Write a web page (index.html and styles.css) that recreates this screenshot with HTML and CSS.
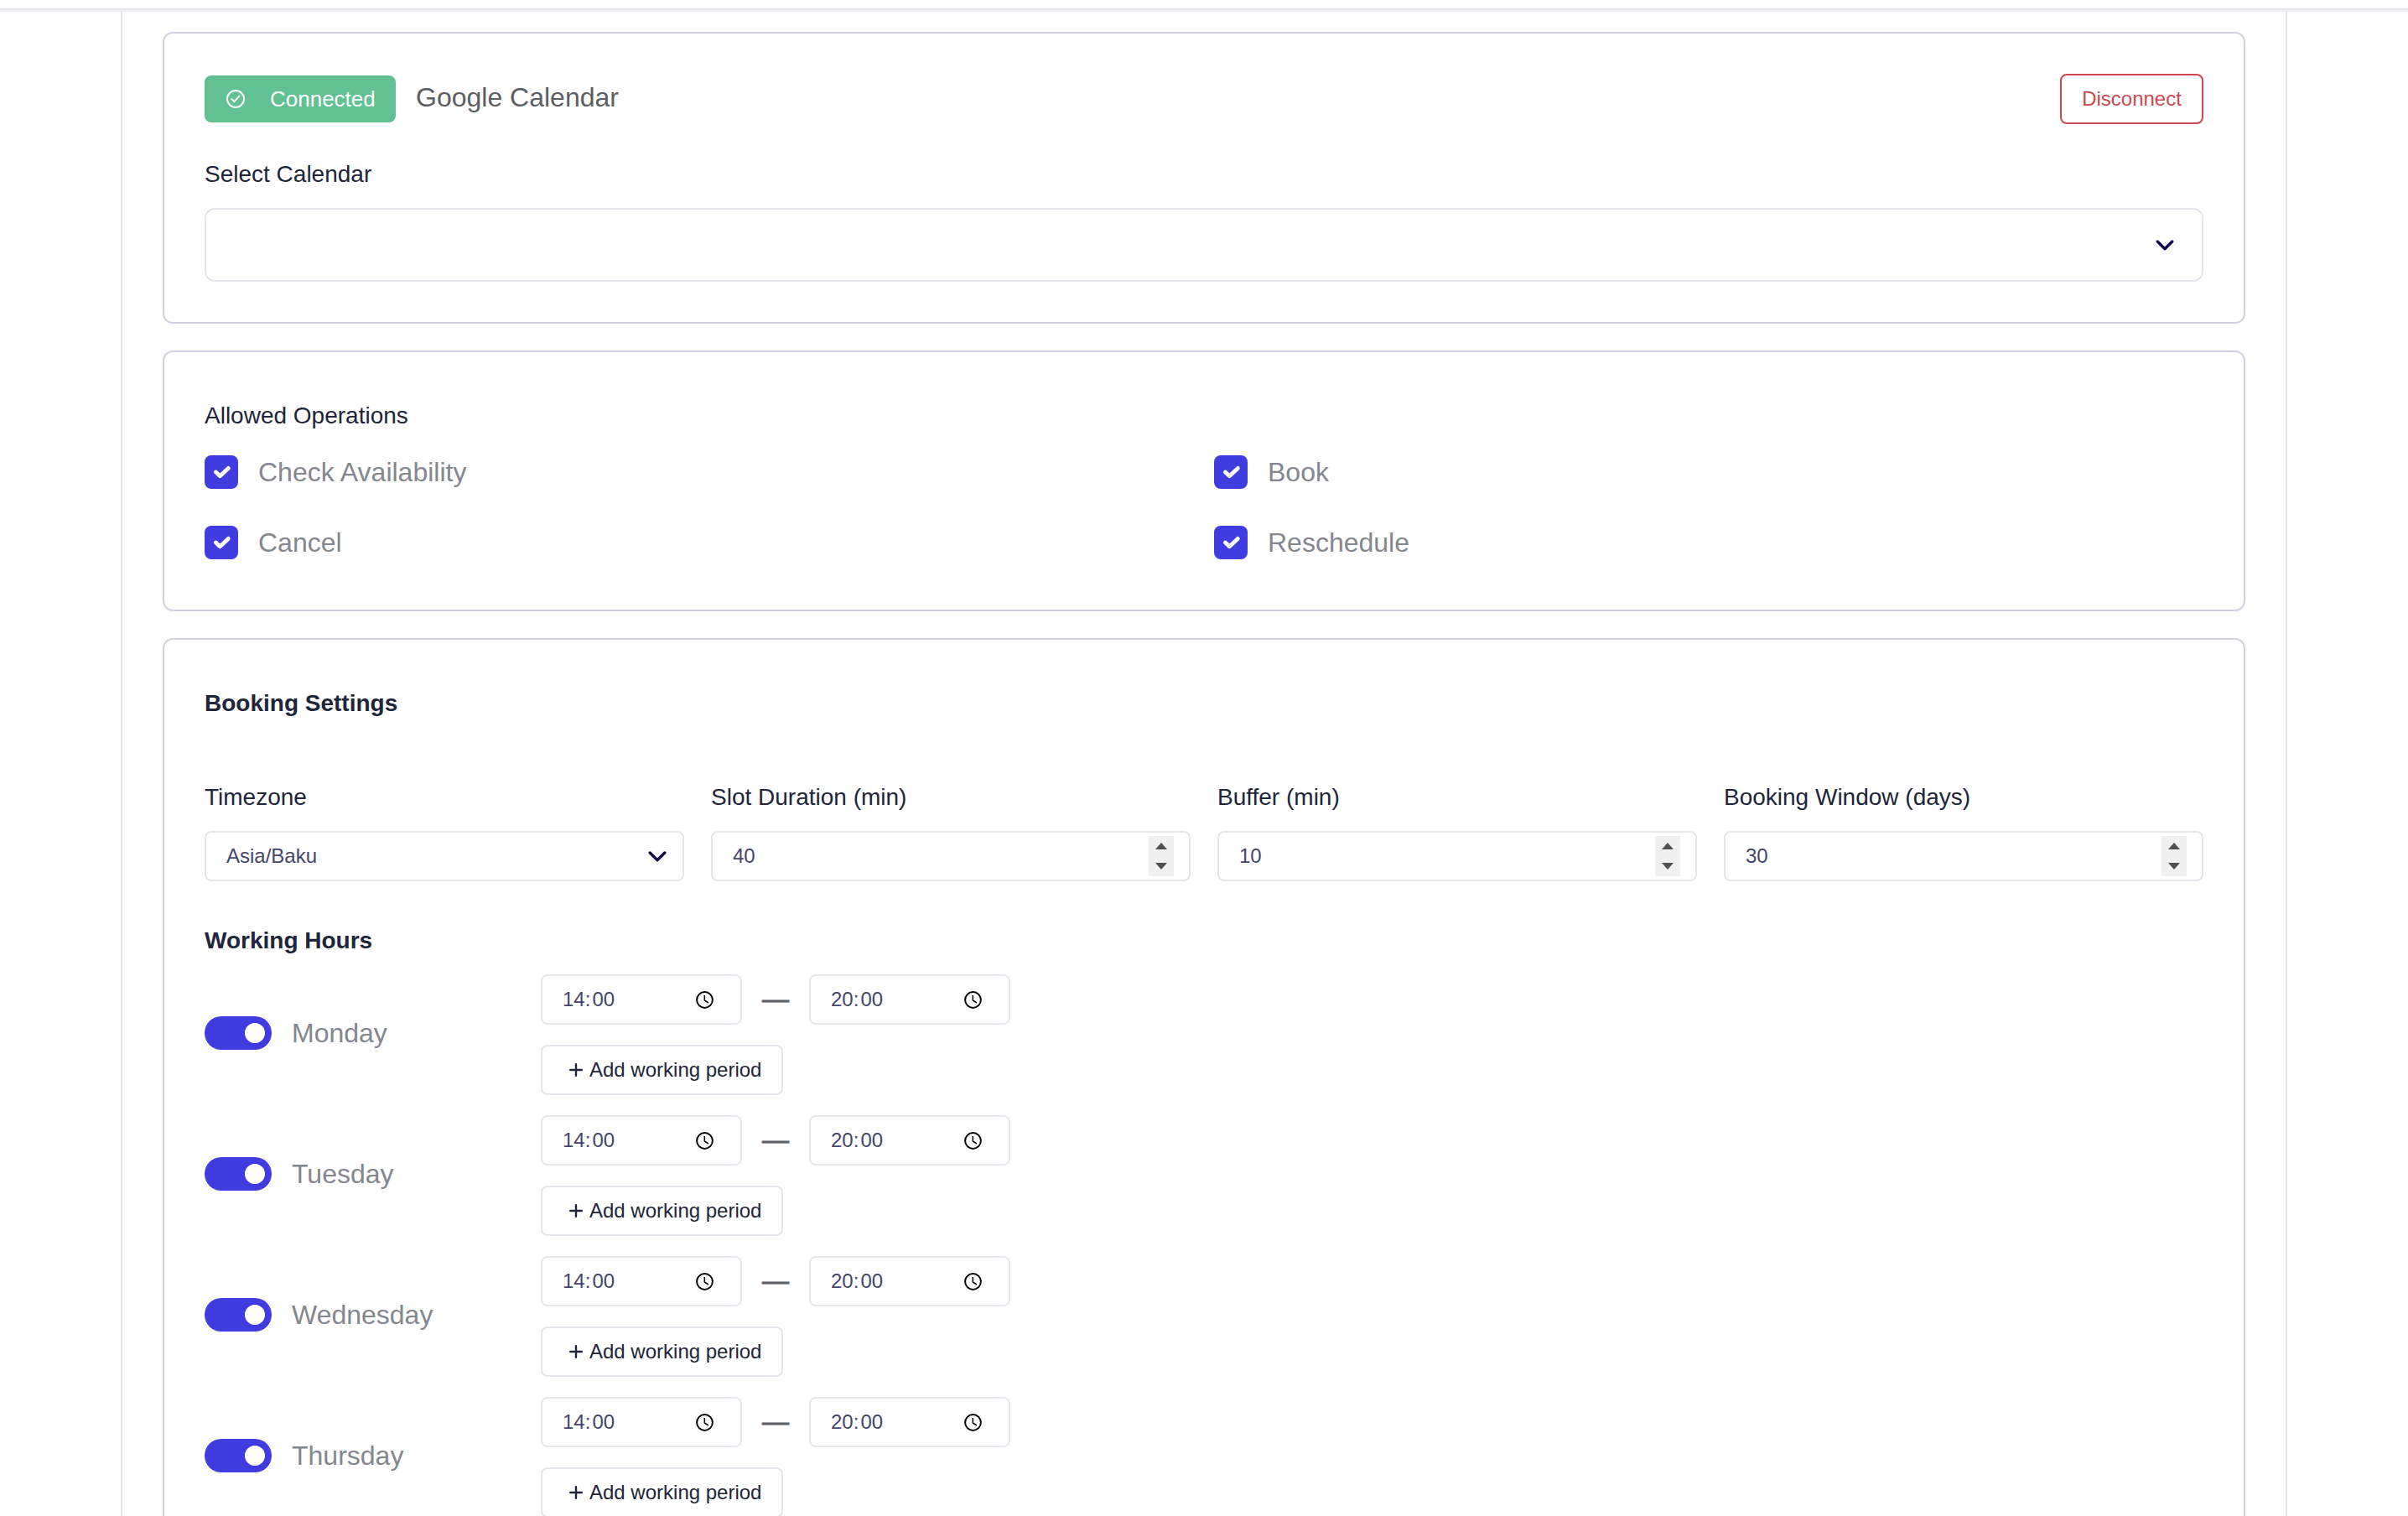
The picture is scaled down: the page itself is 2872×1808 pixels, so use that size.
FILE: index.html
```html
<!DOCTYPE html>
<html lang="en">

<head>
    <meta charset="UTF-8">
    <meta name="viewport" content="width=device-width, initial-scale=1.0">
    <title>Calendar settings</title>
    <link rel="stylesheet" href="styles.css">
</head>

<body>
<!-- icons -->
<svg class="sprite">
    <symbol id="chevron" viewBox="0 0 24 24">
        <path d="M3.2 8L12 16.8L20.8 8" fill="none" stroke="#130a4a" stroke-width="3.4" stroke-linecap="round" stroke-linejoin="round"/>
    </symbol>
    <symbol id="tick" viewBox="0 0 40 40">
        <path d="M13.4 20L18.4 24.8L28.3 15.4" fill="none" stroke="#fff" stroke-width="4.8" stroke-linecap="round" stroke-linejoin="round"/>
    </symbol>
    <symbol id="clock" viewBox="0 0 21 21">
        <circle cx="10.5" cy="10.5" r="9.4" fill="none" stroke="#000" stroke-width="2"/>
        <path d="M10.3 5V11L15 14" fill="none" stroke="#000" stroke-width="1.5"/>
    </symbol>
    <symbol id="plus" viewBox="0 0 16 16">
        <path d="M8 1.2V14.8M1.2 8H14.8" fill="none" stroke="#20253a" stroke-width="2.4" stroke-linecap="round"/>
    </symbol>
    <symbol id="spin" viewBox="0 0 30 48">
        <path d="M8 16L15 8L22 16ZM8 32L15 40L22 32Z" fill="#505050"/>
    </symbol>
</svg>

<div class="topbar"></div>
<div class="panel">
    <div class="card">
        <div class="connect">
            <div class="badge">
                <svg width="22" height="22" viewBox="0 0 22 22" fill="none" stroke="#fff" stroke-width="2" stroke-linecap="round" stroke-linejoin="round">
                    <circle cx="11" cy="11" r="10"/>
                    <path d="M6.4 11.2L9.4 14.2L15.4 7.6"/>
                </svg>
                <span>Connected</span>
            </div>
            <div class="provider">Google Calendar</div>
            <button class="disconnect">Disconnect</button>
        </div>
        <div class="title">Select Calendar</div>
        <div class="select select-lg">
            <span></span>
            <svg class="chevron"><use href="#chevron"/></svg>
        </div>
    </div>

    <div class="card">
        <div class="title title-top ops-title">Allowed Operations</div>
        <div class="ops">
            <div class="op"><svg class="box"><use href="#tick"/></svg>Check Availability</div>
            <div class="op"><svg class="box"><use href="#tick"/></svg>Book</div>
            <div class="op"><svg class="box"><use href="#tick"/></svg>Cancel</div>
            <div class="op"><svg class="box"><use href="#tick"/></svg>Reschedule</div>
        </div>
    </div>

    <div class="card">
        <div class="title title-top bold settings-title">Booking Settings</div>
        <div class="fields">
            <div class="field">
                <div class="title">Timezone</div>
                <div class="select">
                    <span>Asia/Baku</span>
                    <svg class="chevron"><use href="#chevron"/></svg>
                </div>
            </div>
            <div class="field">
                <div class="title">Slot Duration (min)</div>
                <div class="select">
                    <span>40</span>
                    <svg class="spin"><use href="#spin"/></svg>
                </div>
            </div>
            <div class="field">
                <div class="title">Buffer (min)</div>
                <div class="select">
                    <span>10</span>
                    <svg class="spin"><use href="#spin"/></svg>
                </div>
            </div>
            <div class="field">
                <div class="title">Booking Window (days)</div>
                <div class="select">
                    <span>30</span>
                    <svg class="spin"><use href="#spin"/></svg>
                </div>
            </div>
        </div>

        <div class="title bold hours-title">Working Hours</div>
        <div class="days">
            <div class="day">
                <div class="name"><div class="toggle"></div>Monday</div>
                <div class="periods">
                    <div class="period">
                        <div class="time"><span class="clock-text">14<i>:</i>00</span><svg class="clock"><use href="#clock"/></svg></div>
                        <span class="dash">—</span>
                        <div class="time"><span class="clock-text">20<i>:</i>00</span><svg class="clock"><use href="#clock"/></svg></div>
                    </div>
                    <button class="add"><svg class="plus"><use href="#plus"/></svg>Add working period</button>
                </div>
            </div>
            <div class="day">
                <div class="name"><div class="toggle"></div>Tuesday</div>
                <div class="periods">
                    <div class="period">
                        <div class="time"><span class="clock-text">14<i>:</i>00</span><svg class="clock"><use href="#clock"/></svg></div>
                        <span class="dash">—</span>
                        <div class="time"><span class="clock-text">20<i>:</i>00</span><svg class="clock"><use href="#clock"/></svg></div>
                    </div>
                    <button class="add"><svg class="plus"><use href="#plus"/></svg>Add working period</button>
                </div>
            </div>
            <div class="day">
                <div class="name"><div class="toggle"></div>Wednesday</div>
                <div class="periods">
                    <div class="period">
                        <div class="time"><span class="clock-text">14<i>:</i>00</span><svg class="clock"><use href="#clock"/></svg></div>
                        <span class="dash">—</span>
                        <div class="time"><span class="clock-text">20<i>:</i>00</span><svg class="clock"><use href="#clock"/></svg></div>
                    </div>
                    <button class="add"><svg class="plus"><use href="#plus"/></svg>Add working period</button>
                </div>
            </div>
            <div class="day">
                <div class="name"><div class="toggle"></div>Thursday</div>
                <div class="periods">
                    <div class="period">
                        <div class="time"><span class="clock-text">14<i>:</i>00</span><svg class="clock"><use href="#clock"/></svg></div>
                        <span class="dash">—</span>
                        <div class="time"><span class="clock-text">20<i>:</i>00</span><svg class="clock"><use href="#clock"/></svg></div>
                    </div>
                    <button class="add"><svg class="plus"><use href="#plus"/></svg>Add working period</button>
                </div>
            </div>
        </div>
    </div>
</div>
</body>

</html>
```

FILE: styles.css
```css
* {
    margin: 0;
    padding: 0;
    box-sizing: border-box;
}

body {
    height: 100vh;
    overflow: hidden;
    background: #fff;
    font-family: "Liberation Sans", Arial, sans-serif;
    color: #20253a;
}

svg {
    display: block;
    flex-shrink: 0;
}

button {
    font-family: inherit;
    background: #fff;
}

.sprite {
    display: none;
}

.topbar {
    height: 12px;
    border-bottom: 2px solid #e5e6eb;
    box-shadow: 0 2px 0 #f2f2f5;
}

.panel {
    margin: 0 144px;
    padding: 26px 48px 48px;
    border-left: 2px solid #e5e6eb;
    border-right: 2px solid #e5e6eb;
    display: flex;
    flex-direction: column;
    gap: 32px;
}

.card {
    padding: 48px;
    border: 2px solid #d0d2e2;
    border-radius: 12px;
}

.title {
    font-size: 28px;
    line-height: 44px;
    margin-bottom: 18px;
}

.title-top {
    margin-top: 6px;
}

.bold {
    font-weight: bold;
}

/* connection */
.connect {
    display: flex;
    align-items: center;
    gap: 24px;
    margin-bottom: 38px;
}

.badge {
    width: 228px;
    height: 56px;
    padding-left: 26px;
    display: flex;
    align-items: center;
    gap: 30px;
    border-radius: 8px;
    background: #62c192;
    color: #fff;
    font-size: 26px;
}

.provider {
    padding-bottom: 4px;
    font-size: 32px;
    color: #5b5e62;
}

.disconnect {
    width: 171px;
    height: 60px;
    margin-left: auto;
    border: 2px solid #cb4850;
    border-radius: 8px;
    font-size: 24px;
    color: #cb4850;
}

/* inputs */
.select {
    height: 60px;
    padding: 0 18px 0 24px;
    display: flex;
    align-items: center;
    justify-content: space-between;
    border: 2px solid #e5e6eb;
    border-radius: 8px;
    font-size: 24px;
    color: #44466b;
}

.select-lg {
    height: 88px;
    padding-right: 32px;
    border-radius: 12px;
}

.chevron {
    width: 24px;
    height: 24px;
}

.spin {
    width: 30px;
    height: 48px;
    background: #f0f0f0;
}

/* operations */
.ops-title {
    margin-bottom: 13px;
}

.ops {
    display: grid;
    grid-template-columns: 1fr 1fr;
    gap: 20px 24px;
}

.op {
    height: 64px;
    display: flex;
    align-items: center;
    gap: 24px;
    font-size: 32px;
    color: #84878e;
}

.box {
    width: 40px;
    height: 40px;
    border-radius: 8px;
    background: #3f3de0;
}

/* booking */
.settings-title {
    margin-bottom: 68px;
}

.fields {
    display: grid;
    grid-template-columns: repeat(4, 1fr);
    gap: 32px;
}

.hours-title {
    margin-top: 49px;
}

.days {
    display: flex;
    flex-direction: column;
    gap: 24px;
}

.day {
    display: flex;
}

.name {
    width: 401px;
    padding-bottom: 4px;
    display: flex;
    align-items: center;
    gap: 24px;
    font-size: 32px;
    color: #84878e;
}

.toggle {
    width: 80px;
    height: 40px;
    padding: 8px;
    display: flex;
    justify-content: flex-end;
    border-radius: 20px;
    background: #3f3de0;
}

.toggle::after {
    content: "";
    width: 24px;
    height: 24px;
    border-radius: 50%;
    background: #fff;
}

.periods {
    display: flex;
    flex-direction: column;
    align-items: flex-start;
    gap: 24px;
}

.period {
    height: 60px;
    display: flex;
    align-items: center;
    gap: 24px;
}

.dash {
    padding-bottom: 2px;
    font-size: 32px;
    color: #5b5e62;
    -webkit-text-stroke: 0.8px #5b5e62;
}

.time {
    width: 240px;
    height: 60px;
    padding: 0 32px 0 24px;
    display: flex;
    align-items: center;
    justify-content: space-between;
    border: 2px solid #e5e6eb;
    border-radius: 8px;
    font-size: 24px;
    color: #44466b;
}

.clock-text i {
    font-style: normal;
    margin-right: 2px;
}

.clock {
    width: 21px;
    height: 21px;
}

.add {
    width: 289px;
    height: 60px;
    padding-left: 32px;
    display: flex;
    align-items: center;
    gap: 8px;
    border: 2px solid #e5e6eb;
    border-radius: 8px;
    font-size: 24px;
    color: #20253a;
}

.plus {
    width: 16px;
    height: 16px;
}
```
